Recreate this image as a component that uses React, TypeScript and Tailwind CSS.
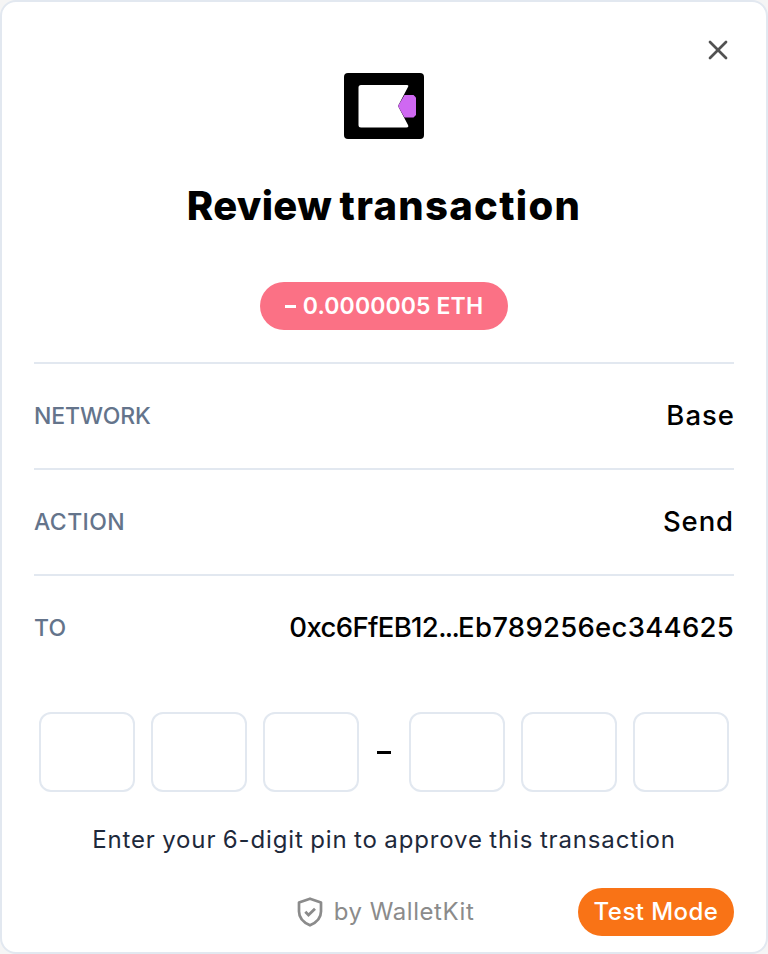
import { X } from "lucide-react";

function WalletLogo() {
  return (
    <svg width="80" height="66" viewBox="0 0 80 66" aria-hidden="true">
      <rect width="80" height="66" rx="4" fill="#000" />
      <path d="M17 12H63Q65 12 64 14L54 33L64 52Q65 54.5 62.500 54.500H17Q14.500 54.500 14.500 52V14.500Q14.500 12 17 12Z" fill="#fff" />
      <path d="M54 33L60.500 22H69.500L72 24.500V42L69.500 44.500H60.500Z" fill="#cf68f2" />
    </svg>
  );
}

function ShieldIcon() {
  return (
    <svg width="26" height="30" viewBox="0 0 26 30" fill="none" stroke="#8b8b8b" aria-hidden="true">
      <path d="M13 1.700L24 5.600V14.500C24 20.500 19.500 25.500 13 28.300C6.500 25.500 2 20.500 2 14.500V5.600Z" strokeWidth="2.700" strokeLinejoin="round" />
      <path d="M8.300 14.800L11.500 18L18 11.700" strokeWidth="2.800" />
    </svg>
  );
}

function PinGroup() {
  return (
    <div className="flex gap-4">
      {[0, 1, 2].map((i) => (
        <input key={i} aria-label="Pin digit" className="h-20 w-24 rounded-xl border-2 border-[#e2e8f0] bg-white text-center outline-none" />
      ))}
    </div>
  );
}

export default function App() {
  const row = "flex h-[106px] items-center justify-between border-t-2 border-[#e2e8f0]";
  const label = "text-[23px] font-medium text-[#64748b]";
  return (
    <div className="h-[954px] w-[768px] bg-[#f5f5f5] font-['Inter','Liberation_Sans',sans-serif]">
      <main className="flex h-full flex-col rounded-2xl border-2 border-[#e2e8f0] bg-white px-8">
        <div className="flex h-[70px] shrink-0 justify-end pt-8">
          <button aria-label="Close" className="h-8 w-8 text-[#525252]">
            <X size={32} strokeWidth={2} />
          </button>
        </div>
        <div className="flex h-[68px] shrink-0 justify-center pt-px">
          <WalletLogo />
        </div>
        <h1 className="mt-[35px] h-[63px] shrink-0 text-center text-[40px] leading-[62px] font-extrabold [word-spacing:-1.5px] whitespace-nowrap text-black">
          <span className="tracking-[0.3px]">Review </span>
          <span className="tracking-[1.3px]">transaction</span>
        </h1>
        <div className="mx-auto mt-11 flex h-12 w-[248px] shrink-0 items-center justify-center gap-[7px] rounded-full bg-[#fb7185] text-white">
          <span className="h-[3px] w-[11px] bg-white" />
          <span className="text-[23px] font-semibold tracking-[0.12px] whitespace-nowrap">0.0000005 ETH</span>
        </div>
        <dl className="mt-8 shrink-0">
          <div className={row}>
            <dt className={label + " tracking-[-0.1px]"}>NETWORK</dt>
            <dd className="-mr-px text-[27.5px] font-medium tracking-[1px] text-black">Base</dd>
          </div>
          <div className={row}>
            <dt className={label + " tracking-[0.4px]"}>ACTION</dt>
            <dd className="text-[27.5px] font-medium tracking-[0.9px] text-black">Send</dd>
          </div>
          <div className={row}>
            <dt className={label + " tracking-[0.3px]"}>TO</dt>
            <dd className="text-[27.5px] font-medium whitespace-nowrap text-black">
              <span className="tracking-[-0.65px]">0xc6FfEB12</span>
              <span className="tracking-[-1.7px]">...</span>
              <span className="tracking-[0.28px]">Eb789256ec344625</span>
            </dd>
          </div>
        </dl>
        <div className="mt-8 flex shrink-0 items-center justify-center">
          <PinGroup />
          <span className="mx-[18px] h-[3px] w-[14px] bg-black" />
          <PinGroup />
        </div>
        <p className="mt-[30px] h-9 shrink-0 text-center text-2xl leading-9 tracking-[0.85px] [word-spacing:-1px] whitespace-nowrap text-[#1e293b]">Enter your 6-digit pin to approve this transaction</p>
        <footer className="mt-[30px] grid h-12 shrink-0 grid-cols-[1fr_auto_1fr] items-center">
          <div className="col-start-2 flex items-center gap-[11px] pl-[3px] text-2xl tracking-[0.55px] text-[#8b8b8b]">
            <ShieldIcon />
            <span className="whitespace-nowrap">by WalletKit</span>
          </div>
          <div className="flex h-12 w-[156px] items-center justify-center justify-self-end rounded-full bg-[#f97316] text-2xl font-medium tracking-[0.45px] whitespace-nowrap text-white">Test Mode</div>
        </footer>
      </main>
    </div>
  );
}
